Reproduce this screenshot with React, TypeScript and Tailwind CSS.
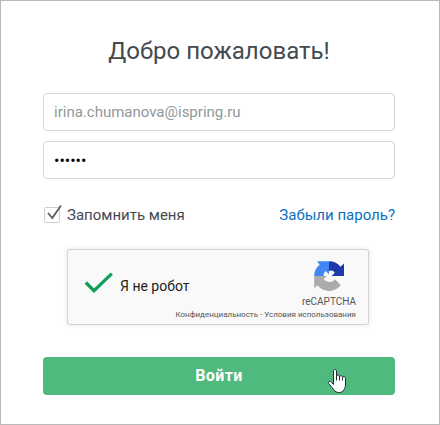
const RecaptchaLogo = () => (
  <svg className="h-[30px] w-[30px]" viewBox="0 0 30 30">
    <path
      fill="#1c3aa9"
      d="M15 .3C19.4 .3 23.6 2.1 26.5 5.7L30 2.6V15H17.6L20.8 11.8C19.8 10.3 18.6 9.6 17.3 9.6C16.4 9.4 15.6 9.7 15 10.2Z"
    />
    <path
      fill="#4285f4"
      d="M15 .3H3L5.7 3.8C2.1 6.4 .2 10.6 .2 15H9.6C9.4 13 10.2 11.2 11.6 10L15 13.2Z"
    />
    <path
      fill="#ababab"
      d="M.2 15V27.4L3.5 24.3C6.4 27.9 10.6 30 15 30C19.8 30 24.1 27.7 26.8 24.1L20.8 18.2C19.6 20.2 17.7 21 15.4 20.9C12.8 20.7 11 19.8 9.6 18L12.8 15Z"
    />
  </svg>
);

const HandCursor = () => (
  <svg className="absolute top-[11px] left-[284px] h-[26px] w-[20px]" viewBox="0 0 20 26">
    <path
      fill="#fff"
      stroke="#252538"
      strokeWidth="1"
      strokeLinejoin="round"
      d="M6.5 16.5V3C6.5 1 9.5 1 9.5 3V8.5C9.5 6.5 12.5 6.5 12.5 8.5V9C12.5 7.3 15.5 7.3 15.5 9.3V9.8C15.5 8.3 18.5 8.3 18.5 10.3V17C18.5 19 17.5 20.5 17 21.5C15.5 25.5 9 25.5 6.7 21.8C5.2 19.5 2.8 17 1.7 15.4C.4 13.5 2.8 12.6 4.3 14.2Z"
    />
    <path fill="none" stroke="#252538" d="M9.5 8V12.5M12.5 8.5V12.5M15.5 9.5V12.5" />
  </svg>
);

const Captcha = () => (
  <div className="relative mt-[25px] ml-6 flex h-[76px] w-[302px] rounded-[3px] border border-[#d3d3d3] bg-[#f9f9f9] shadow-[0_0_4px_1px_rgba(0,0,0,0.08)]">
    <svg className="mt-[22px] ml-[16px] h-[22px] w-[30px] shrink-0" viewBox="0 0 30 22">
      <path fill="none" stroke="#0f9d58" strokeWidth="3.2" d="M1.8 10.5L10 18.7L27.8 1.6" />
    </svg>
    <span className="mt-[26px] ml-[6px] text-[14px] leading-[20px] text-[#222]">Я не робот</span>
    <div className="absolute top-[11px] right-[12px] flex flex-col items-end text-[#555]">
      <div className="mr-[12px]">
        <RecaptchaLogo />
      </div>
      <span className="mt-[5px] text-[10px] leading-[12px]">reCAPTCHA</span>
      <span className="mt-[2px] text-[8px] leading-[10px] whitespace-nowrap">
        Конфиденциальность - Условия использования
      </span>
    </div>
  </div>
);

const App = () => {
  return (
    <main className="h-[425px] w-[440px] border border-[#bababa] bg-white pr-[44px] pl-[42px] font-['Roboto',sans-serif] text-[#444a50]">
      <h1 className="pt-[34px] text-center text-[24px] leading-[32px]">Добро пожаловать!</h1>
      <form>
        <input
          className="mt-[26px] block h-[38px] w-full rounded-[4px] border border-[#d6d6d6] px-[10px] text-[15px] text-[#8f989c] outline-none"
          type="email"
          defaultValue="irina.chumanova@ispring.ru"
        />
        <input
          className="mt-[10px] block h-[38px] w-full rounded-[4px] border border-[#d6d6d6] px-[10px] text-[16px] text-black outline-none"
          type="password"
          defaultValue="secret"
        />
        <div className="mt-[25px] flex h-5 items-center justify-between text-[15px] leading-5">
          <label className="flex items-center">
            <svg className="mr-[5px] h-5 w-[19px]" viewBox="0 0 19 20">
              <rect x="1.5" y="3.5" width="15" height="15" rx="1" fill="#fff" stroke="#cfcfcf" />
              <path fill="none" stroke="#5c5c5c" strokeWidth="1.8" d="M5 9L9.3 14L18 1.5" />
            </svg>
            <span className="pt-0.5">Запомнить меня</span>
          </label>
          <a className="pt-0.5 text-[#0b6fc0]" href="#">
            Забыли пароль?
          </a>
        </div>
        <Captcha />
        <button
          className="relative mt-8 block h-[38px] w-full rounded-[4px] bg-[#50ba7e] text-[16px] font-bold tracking-[0.4px] text-white"
          type="button"
        >
          Войти
          <HandCursor />
        </button>
      </form>
    </main>
  );
};

export default App;
